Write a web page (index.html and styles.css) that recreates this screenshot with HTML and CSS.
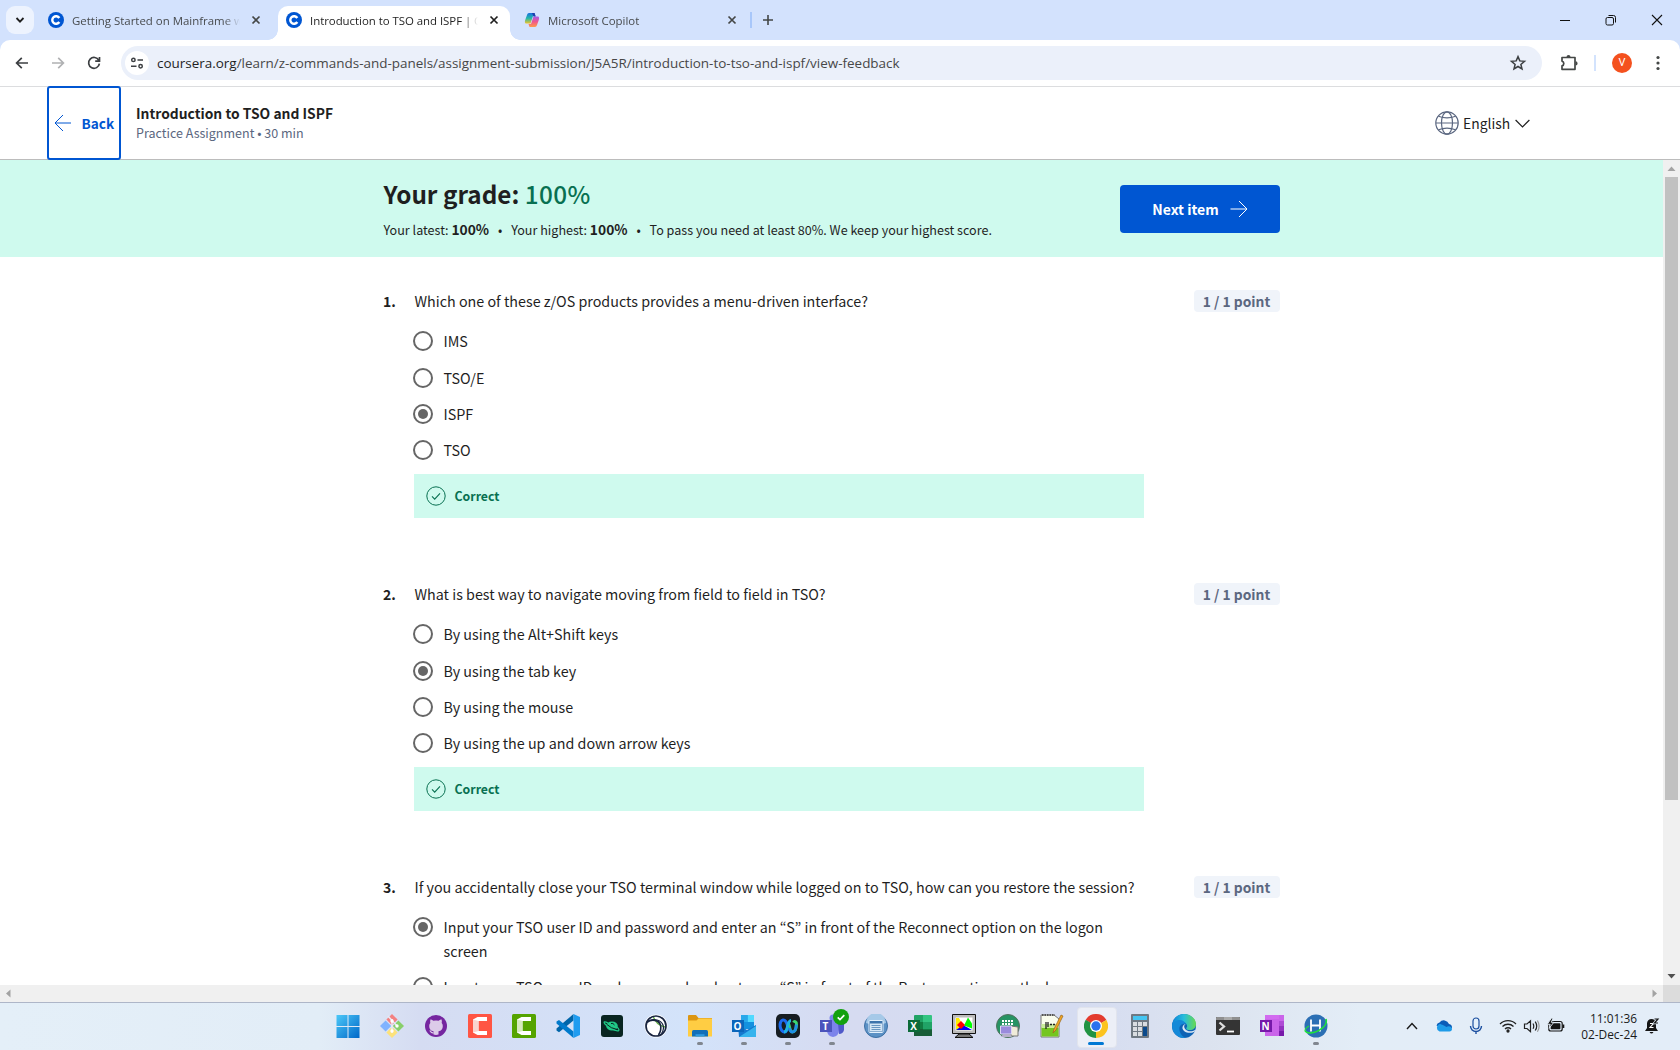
FILE: index.html
```html
<!DOCTYPE html>
<html lang="en">
<head>
<meta charset="utf-8">
<title>Introduction to TSO and ISPF | Coursera</title>
<link rel="stylesheet" href="styles.css">
</head>
<body>
<svg class="defs" width="0" height="0" aria-hidden="true">
  <symbol id="x" viewBox="0 0 16 16"><path d="M4.5 4.5l7 7m0-7l-7 7" stroke="currentColor" stroke-width="1.7" fill="none"/></symbol>
  <symbol id="coursera" viewBox="0 0 16 16"><circle cx="8" cy="8" r="8" fill="#0056d2"/><path d="M11.3 6A3.8 3.8 0 1 0 11.3 10" fill="none" stroke="#fff" stroke-width="2.4"/></symbol>
  <symbol id="check" viewBox="0 0 20 20"><circle cx="10" cy="10" r="9.2" fill="none" stroke="#087051"/><path d="M6 10.3l2.7 2.8L14 7.3" fill="none" stroke="#087051" stroke-width="1.1"/></symbol>
</svg>

<div class="tabstrip">
  <button class="tabsearch"><svg width="10" height="10" viewBox="0 0 10 10"><path d="M1.5 3l3.5 3.6L8.500 3" fill="none" stroke="#1f1f1f" stroke-width="1.8"/></svg></button>
  <div class="tab first"><svg class="fav"><use href="#coursera"/></svg><span class="tabtext">Getting Started on Mainframe with z/OS</span><svg class="close"><use href="#x"/></svg></div>
  <div class="tab active"><svg class="fav"><use href="#coursera"/></svg><span class="tabtext">Introduction to TSO and ISPF | Coursera</span><svg class="close"><use href="#x"/></svg></div>
  <div class="tab last"><svg class="fav" viewBox="0 0 16 16">
    <defs><linearGradient id="cp1" x2="0" y2="1"><stop stop-color="#1a6fe0"/><stop offset=".5" stop-color="#22b8a8"/><stop offset="1" stop-color="#f3c32a"/></linearGradient><linearGradient id="cp2" x2="0" y2="1"><stop stop-color="#a65be8"/><stop offset=".5" stop-color="#f0568c"/><stop offset="1" stop-color="#ff9a4a"/></linearGradient></defs>
    <path d="M5 1h5.500l1 3H9L6.500 11.500H2.500C.5 11.500.8 9.500 1.200 8L3 3C3.400 1.800 4 1 5 1z" fill="url(#cp1)"/><path d="M11 15H5.500l-1-3H7l2.500-7.500h4c2 0 1.700 2 1.300 3.500L13 13c-.4 1.200-1 2-2 2z" fill="url(#cp2)"/><path d="M8 1h2.500l1.200 3.500H9.500z" fill="#1e3fae"/></svg><span class="tabtext">Microsoft Copilot</span><svg class="close"><use href="#x"/></svg></div>
  <i class="tabdivider"></i>
  <svg class="plus" width="12" height="12" viewBox="0 0 12 12"><path d="M6 1v10M1 6h10" stroke="#444746" stroke-width="1.600"/></svg>
  <div class="winctl">
    <svg width="14" height="14" viewBox="0 0 14 14"><path d="M2 7.500h10" stroke="#111"/></svg>
    <svg width="14" height="14" viewBox="0 0 14 14" fill="none" stroke="#111"><rect x="2" y="4.500" width="7.500" height="7.500" rx="1.500"/><path d="M4.500 2.500h5a2 2 0 0 1 2 2v5"/></svg>
    <svg width="14" height="14" viewBox="0 0 14 14"><path d="M2 2l10 10m0-10L2 12" stroke="#111" stroke-width="1.100"/></svg>
  </div>
</div>

<div class="toolbarwrap"><div class="toolbar">
  <svg class="nav" viewBox="0 0 18 18"><path d="M15 9H4M8.800 3.800L3.600 9l5.200 5.200" fill="none" stroke="#3c3f42" stroke-width="1.700"/></svg>
  <svg class="nav" viewBox="0 0 18 18"><path d="M3 9h11M9.200 3.800L14.400 9l-5.200 5.200" fill="none" stroke="#b0b1b3" stroke-width="1.700"/></svg>
  <svg class="nav" viewBox="0 0 18 18"><path d="M13.800 6.300A5.400 5.400 0 1 0 14.400 9.600M14.500 3v4.200h-4.300" fill="none" stroke="#3c3f42" stroke-width="1.700"/></svg>
  <div class="omnibox">
    <span class="chip"><svg width="14" height="14" viewBox="0 0 14 14" fill="none" stroke="#3c3f42" stroke-width="1.500"><circle cx="3.400" cy="3.900" r="1.700"/><path d="M7.500 3.900H13M1 10.300h5.500"/><circle cx="10.600" cy="10.300" r="1.700"/></svg></span>
    <span class="url"><b>coursera.org</b>/learn/z-commands-and-panels/assignment-submission/J5A5R/introduction-to-tso-and-ispf/view-feedback</span>
    <svg class="star" viewBox="0 0 18 18"><path d="M9 2.600l1.800 4.300 4.700.4-3.600 3.100 1.100 4.600L9 12.500 5 15l1.100-4.600-3.600-3.100 4.700-.4z" fill="none" stroke="#3c3f42" stroke-width="1.500"/></svg>
  </div>
  <svg class="puzzle" width="18" height="18" viewBox="0 0 18 18"><path d="M2 3.500h13V15.300H2V11.900a2.500 2.500 0 0 0 0-4.800z" fill="none" stroke="#444746" stroke-width="1.700" stroke-linejoin="round"/><path d="M6.500 3a2 2 0 0 1 4 0zM15.500 7.300a2 2 0 0 1 0 4.200z" fill="#444746"/></svg>
  <i class="tooldivider"></i>
  <span class="avatar">V</span>
  <svg class="dots" width="4" height="16" viewBox="0 0 4 16" fill="#444746"><circle cx="2" cy="2.500" r="1.600"/><circle cx="2" cy="8" r="1.600"/><circle cx="2" cy="13.500" r="1.600"/></svg>
</div></div>

<header class="pagehead">
  <a class="back"><svg width="18" height="18" viewBox="0 0 18 18" fill="none" stroke="#0056d2"><path d="M17 9H1.500M9 1L1 9l8 8"/></svg>Back</a>
  <div class="headtitle"><h1>Introduction to TSO and ISPF</h1><p>Practice Assignment • 30 min</p></div>
  <div class="lang"><svg width="24" height="24" viewBox="0 0 24 24" fill="none" stroke="#5b6780" stroke-width="1.200"><circle cx="12" cy="12" r="11.200"/><ellipse cx="12" cy="12" rx="5.500" ry="11.200"/><path d="M1 12h22M3.500 5.200c5 2 12 2 17 0M3.500 18.800c5-2 12-2 17 0"/></svg><span>English</span><svg width="15" height="9" viewBox="0 0 15 9"><path d="M.6 1l6.900 7 6.900-7" fill="none" stroke="#1f1f1f" stroke-width="1.200"/></svg></div>
</header>

<div class="viewport">
  <main>
    <section class="banner">
      <div>
        <h2>Your grade: <span>100%</span></h2>
        <p class="scores"><span>Your latest: <b>100%</b></span><i>•</i><span>Your highest: <b>100%</b></span><i>•</i><span>To pass you need at least 80%. We keep your highest score.</span></p>
      </div>
      <button class="next">Next item<svg width="18" height="18" viewBox="0 0 18 18" fill="none" stroke="#fff"><path d="M.5 9H16.500M9 1l8 8-8 8"/></svg></button>
    </section>
    <section class="questions">
      <article>
        <div class="qhead"><b>1.</b><p>Which one of these z/OS products provides a menu-driven interface?</p><span class="points">1 / 1 point</span></div>
        <ul><li><i></i>IMS</li><li><i></i>TSO/E</li><li><i class="on"></i>ISPF</li><li><i></i>TSO</li></ul>
        <div class="correct"><svg width="20" height="20"><use href="#check"/></svg>Correct</div>
      </article>
      <article>
        <div class="qhead"><b>2.</b><p>What is best way to navigate moving from field to field in TSO?</p><span class="points">1 / 1 point</span></div>
        <ul><li><i></i>By using the Alt+Shift keys</li><li><i class="on"></i>By using the tab key</li><li><i></i>By using the mouse</li><li><i></i>By using the up and down arrow keys</li></ul>
        <div class="correct"><svg width="20" height="20"><use href="#check"/></svg>Correct</div>
      </article>
      <article>
        <div class="qhead"><b>3.</b><p>If you accidentally close your TSO terminal window while logged on to TSO, how can you restore the session?</p><span class="points">1 / 1 point</span></div>
        <ul><li><i class="on"></i><span>Input your TSO user ID and password and enter an “S” in front of the Reconnect option on the logon screen</span></li><li><i></i><span>Input your TSO user ID and password and enter an “S” in front of the Restore option on the l</span></li></ul>
      </article>
    </section>
  </main>
  <div class="vscroll"><svg width="17" height="17"><path d="M4.500 11l4-4.500 4 4.500z" fill="#a3a3a3"/></svg><i></i><svg width="17" height="17"><path d="M4.500 6l4 4.500 4-4.500z" fill="#505050"/></svg></div>
</div>
<div class="hscroll"><svg width="17" height="17"><path d="M10.500 4.500L6 8.500l4.500 4z" fill="#a3a3a3"/></svg><svg width="17" height="17"><path d="M6.500 4.500L11 8.500l-4.500 4z" fill="#a3a3a3"/></svg><i></i></div>

<footer class="taskbar">
  <div class="apps">
    <span><svg viewBox="0 0 24 24"><defs><linearGradient id="w" x2="1" y2="1"><stop stop-color="#4cc8f8"/><stop offset="1" stop-color="#0067c8"/></linearGradient></defs><path d="M.5 1h11v11H.500zM12.500 1h11v11h-11zM.5 13h11v11H.500zM12.500 13h11v11h-11z" fill="url(#w)"/></svg></span>
    <span><svg viewBox="0 0 24 24"><path d="M12 0l5.600 5.600L12 11.200 6.400 5.600z" fill="#f38181"/><path d="M18.400 6.400L24 12l-5.600 5.600-5.600-5.600z" fill="#88cf6a"/><path d="M12 12.800l5.600 5.600L12 24l-5.600-5.600z" fill="#fce27c"/><path d="M5.600 6.400l5.600 5.600-5.600 5.600L0 12z" fill="#80b3ff"/><path d="M8 2l9 10M12 5v14" stroke="#e7e9f6" stroke-width="1.500"/><circle cx="12" cy="7" r="1.700" fill="#fff"/><circle cx="12" cy="17" r="1.700" fill="#fff"/><circle cx="17" cy="12" r="1.700" fill="#fff"/></svg></span>
    <span><svg viewBox="0 0 24 24"><circle cx="12" cy="12" r="11" fill="#7526a0"/><path d="M9.500 20.500v-3.200C6.500 16.800 5.200 14.700 5.200 12c0-1.200.4-2.200 1.100-3-.3-1.100-.2-2.400.1-3.400 1.100 0 2.200.7 2.900 1.200a11 11 0 0 1 5.400 0c.7-.5 1.800-1.200 2.900-1.200.3 1 .4 2.300.1 3.400.7.8 1.100 1.800 1.100 3 0 2.700-1.300 4.800-4.300 5.300v3.200a8 8 0 0 1-5 0z" fill="#dccbe9"/><path d="M5.800 16.500q1.800 3 3.700 2.300" stroke="#dccbe9" stroke-width="1.200" fill="none"/></svg></span>
    <span><svg viewBox="0 0 24 24"><rect width="24" height="24" rx="1.500" fill="#ff5544"/><path d="M19 3H9.500L5 5.500v13L9.500 21H19v-4h-8.500V7H19z" fill="#fff"/><path d="M5 5.500l5.500 1.500v10L5 18.500z" fill="#f9d4cf"/></svg></span>
    <span><svg viewBox="0 0 24 24"><rect width="24" height="24" rx="1.500" fill="#55a400"/><path d="M19 3H9.500L5 5.500v13L9.500 21H19v-4h-8.500V7H19z" fill="#fff"/><path d="M5 5.500l5.500 1.500v10L5 18.500z" fill="#d6e9bd"/></svg></span>
    <span><svg viewBox="0 0 24 24"><path d="M17.500 0v6.500L3 18.200.5 16.500v-2z" fill="#0065a9"/><path d="M17.500 24v-6.500L3 6 .5 7.500v2z" fill="#007acc"/><path d="M17.500 0L24 3v18l-6.500 3z" fill="#1f9cf0"/></svg></span>
    <span><svg viewBox="0 0 24 24"><rect x="1" y="1" width="22" height="22" rx="3" fill="#092521"/><ellipse cx="12" cy="12" rx="5.800" ry="4.600" fill="#20c987"/><path d="M8 9C4.500 7 3 7.600 5 10c2.500 3 9 6.500 12.500 6.800 2.500 0 1.500-2-1-4" fill="none" stroke="#20c987" stroke-width="1.200"/><path d="M7 10.500q4 4 9.500 4.800M11 9.500q2-.8 3.500 1.500" fill="none" stroke="#092521" stroke-width="1"/></svg></span>
    <span><svg viewBox="0 0 24 24"><circle cx="12" cy="12" r="11.500" fill="#fff"/><path d="M9 2q3 9 12 11" stroke="#68b545" stroke-width="1.300" fill="none"/><circle cx="12" cy="12" r="10" fill="none" stroke="#17233f" stroke-width="1.700"/><path d="M3 8.500C8 4 15 6.500 16.500 11c1 3.500.2 6.500-2 10" fill="none" stroke="#17233f" stroke-width="1.600"/><path d="M4 7c6-3 13-1 15 4 1 3 .3 6-1.500 8.500" fill="none" stroke="#17233f" stroke-width="1.200"/></svg></span>
    <span class="run"><svg viewBox="0 0 24 24"><path d="M0 2q0-1 1-1h7l2.500 3H24v6H0z" fill="#dc9612"/><path d="M0 6.500h8.500l2-2H24V22.500H0z" fill="#ffcd43"/><path d="M4 22.500v-5q0-1.500 1.500-1.500h13q1.500 0 1.500 1.500v5z" fill="#126fb8"/><path d="M7.500 22.500v-2.300h9v2.300z" fill="#2e9be0"/></svg></span>
    <span class="run"><svg viewBox="0 0 24 24"><path d="M9 1h13v14H9z" fill="#1490df"/><path d="M15.500 1H22v7h-6.500z" fill="#50d9ff"/><path d="M9 1h6.500v7H9z" fill="#28a8ea"/><path d="M6 11l9 5 9-5v12H7z" fill="#1578ce"/><path d="M7 23l17-11v11z" fill="#36b3ed"/><path d="M0 6h12v12H0z" fill="#0b66bb"/></svg><em>O</em></span>
    <span class="run"><svg viewBox="0 0 24 24"><rect width="24" height="24" rx="5" fill="#171d22"/><path d="M17.500 8.500c1-1.600 3.200-1 3 2-.2 4-1.700 7.500-4 7.500-3 0-2.700-6-4.500-10" fill="none" stroke="#3bd671" stroke-width="3"/><path d="M20.300 10.500c-.2 4-1.600 7.500-3.900 7.500-1.700 0-2.600-2-3.200-4" fill="none" stroke="#1f8fe8" stroke-width="3"/><ellipse cx="7.800" cy="12" rx="3.700" ry="6" fill="none" stroke="#1c6cf0" stroke-width="3" transform="rotate(-8 7.800 12)"/><path d="M8 18c4.500 0 2.800-11.500 7-11.500" fill="none" stroke="#1fb4e2" stroke-width="3"/></svg></span>
    <span class="run teams"><svg viewBox="0 0 24 24"><circle cx="13" cy="4" r="3.500" fill="#7b83eb"/><path d="M7 7h12v9q0 6-6 7-6-1-6-7z" fill="#7b83eb"/><path d="M18 9h6v7q-1 4-5 4z" fill="#5059c9"/><path d="M0 6h12v12H0z" fill="#4b53bc"/></svg><em>T</em><svg class="ok" viewBox="0 0 16 16"><circle cx="8" cy="8" r="8" fill="#13a10e"/><path d="M4.700 8.300l2.300 2.200 4.300-4.300" fill="none" stroke="#fff" stroke-width="1.700"/></svg></span>
    <span><svg viewBox="0 0 24 24"><circle cx="12" cy="12" r="11.500" fill="#5c91c5" stroke="#3d70a4"/><path d="M2 9a10 10 0 0 1 20 0q-10 4-20 0z" fill="#a6c9e8"/><rect x="5" y="6.500" width="14" height="12" rx="1" fill="#3e74ac" stroke="#e4f1fd"/><path d="M6 9.500h12v8H6z" fill="#d6e6f5"/><path d="M7.500 11.500h9m-9 2h9m-9 2h9" stroke="#4d81b5" stroke-width=".8"/></svg></span>
    <span><svg viewBox="0 0 24 24"><path d="M6 2q0-1 1-1h8v7H6z" fill="#21a366"/><path d="M15 1h8q1 0 1 1v6h-9z" fill="#33c481"/><path d="M6 8h9v8H6z" fill="#107c41"/><path d="M15 8h9v7h-9z" fill="#21a366"/><path d="M6 15h18v7H6z" fill="#185c37"/><path d="M15 15h9v1h-9z" fill="#107c41"/><path d="M0 6h12v12H0z" fill="#0c6a38"/></svg><em>X</em></span>
    <span><svg viewBox="0 0 24 24"><path d="M.5.500h23v19H.500z" fill="#bbb" stroke="#111"/><path d="M3.500 3.500h17v13h-17z" fill="#fff"/><path d="M4 4h3l4 8-7 4z" fill="#ffed00"/><path d="M4 16l7-5 9 5z" fill="#00f"/><path d="M16 3.500l4 6v5l-8-3z" fill="#0f0"/><path d="M9 7l4 4-4 4-4-4z" fill="#f00"/><path d="M7 20h10l4 3.500H3z" fill="#777" stroke="#111"/></svg></span>
    <span><svg viewBox="0 0 24 24"><circle cx="12" cy="12" r="11.500" fill="#269363" stroke="#53705e"/><path d="M6 7h12M6 10h12M6 13h12" stroke="#fff" stroke-width="2" stroke-dasharray="2 1"/><path d="M15 12l7 1v9h-7z" fill="#f0ecd9" stroke="#777"/><path d="M4.500 12h11v8h-11z" fill="#9a8bdc" stroke="#ddd8f4"/><path d="M7 20h7l2 3H5z" fill="#b7afc9"/></svg></span>
    <span><svg viewBox="0 0 24 24"><path d="M1 1h13l5 4v18H1z" fill="#f9fced" stroke="#777"/><path d="M1.500 13h17v9.500h-17z" fill="#74c620"/><path d="M1.500 10h17v4h-17z" fill="#c9ec9a"/><path d="M2 1h13" stroke="#555" stroke-width="2" stroke-dasharray="1.500 1"/><path d="M6 8v7M8 8v5M10 10.500h2m1 0h2" stroke="#222" stroke-width="1.300"/><path d="M13 19l1-4 7-14 2 1-7 14z" fill="#f5a623" stroke="#96651b" stroke-width=".7"/></svg></span>
    <span class="current"><svg viewBox="0 0 24 24"><path d="M12 12L1.600 6A12 12 0 0 1 22.400 6z" fill="#e33b2e"/><path d="M12 12l10.400-6A12 12 0 0 1 12 24z" fill="#fcc31e"/><path d="M12 12v12A12 12 0 0 1 1.600 6z" fill="#229342"/><path d="M6.800 15L1.600 6 12 12z" fill="#229342"/><path d="M17.200 15L12 24V12z" fill="#fcc31e"/><circle cx="12" cy="12" r="6" fill="#fff"/><circle cx="12" cy="12" r="4.700" fill="#2b72ee"/></svg></span>
    <span><svg viewBox="0 0 24 24"><rect x="3" width="18" height="24" rx="1" fill="#6f7983"/><path d="M5 2h14v4H5z" fill="#45c5f2"/><path d="M5 8h4v4H5zM10 8h4v4h-4zM15 8h4v4h-4zM5 13h4v4H5zM10 13h4v4h-4zM5 18h4v4H5zM10 18h4v4h-4z" fill="#d9dde1"/><path d="M15 13h4v9h-4z" fill="#0b4a8c"/></svg></span>
    <span><svg viewBox="0 0 24 24"><defs><linearGradient id="e" x2="1"><stop stop-color="#0d82d8"/><stop offset=".5" stop-color="#28bddb"/><stop offset="1" stop-color="#69db4d"/></linearGradient></defs><circle cx="12" cy="12" r="12" fill="#0f63b5"/><path d="M0 11C1 4 6 0 12 0c7 0 12 5 12 10 0 4-3 6-6 6-3 0-5-1-3-3C16 8 9 5 0 11z" fill="url(#e)"/><path d="M0 12c0-6 11-9 14-2-5-1-8 3-6 8 1 3 3 5 6 5.800C6 25 0 19 0 12z" fill="#1489d8"/><path d="M14 10c-3 1-2 5 1 6.500s6 .8 8-.5q1 0 .5 1c-5 4-14 1-13-4 .5-2 2-3 3.500-3z" fill="#dbe7f4"/></svg></span>
    <span><svg viewBox="0 0 24 24"><rect y="3" width="24" height="18" rx="1" fill="#343434"/><path d="M0 6V4q0-1 1-1h22q1 0 1 1v2z" fill="#8f8f8f"/><path d="M8 3h8v3H8z" fill="#aaa"/><path d="M3.500 8.500L8 12.500l-4.500 4" fill="none" stroke="#ddd" stroke-width="2.300"/><path d="M11 17.500h7" stroke="#fff" stroke-width="1.800"/></svg></span>
    <span><svg viewBox="0 0 24 24"><path d="M5 1h18q1 0 1 1v5H5z" fill="#d26bf0"/><path d="M5 5h14v17H5z" fill="#ca64ea"/><path d="M19 1h5v6h-5z" fill="#ca64ea"/><path d="M19 7h5v5h-5z" fill="#ae4bd5"/><path d="M19 12h5v5h-5z" fill="#9332bf"/><path d="M19 17h5v5h-5z" fill="#7719aa"/><path d="M0 6h12v12H0z" fill="#7719aa"/></svg><em>N</em></span>
    <span class="run"><svg viewBox="0 0 24 24"><circle cx="12" cy="12" r="11.500" fill="#2b6fb4"/><path d="M7 5.500v12M16 5.500v12M7 11.500h9" stroke="#fff" stroke-width="1.800"/><path d="M1 17c5 6 24-3 21-12" fill="none" stroke="#1ee23a" stroke-width="1.600"/><path d="M1 17q0-3 4-5" fill="none" stroke="#1ee23a" stroke-width="1.200"/></svg></span>
  </div>
  <div class="tray">
    <svg viewBox="0 0 20 20"><path d="M5 13l5-5.500 5 5.500" fill="none" stroke="#1a1a1a" stroke-width="1.400"/></svg>
    <svg viewBox="0 0 20 20"><path d="M2.500 9.500a4 4 0 0 1 3-3 5.500 5.500 0 0 1 9.500 1.500 3.800 3.800 0 0 1 3 4l-8 2z" fill="#0a5cb8"/><path d="M5.500 15.500a4 4 0 0 1 0-7.500c2 0 6 2.500 7 3 2-1.500 5.500-.5 5.500 2 0 1.500-1 2.500-2.500 2.500z" fill="#1e9be8"/></svg>
    <svg viewBox="0 0 20 20"><rect x="7" y="2" width="6" height="11" rx="3" fill="#e4f0fb" stroke="#1b4fa0" stroke-width="1.200"/><path d="M4.500 10a5.500 5.500 0 0 0 11 0M10 15.500V18" fill="none" stroke="#1b4fa0" stroke-width="1.400"/></svg>
    <svg class="tight" viewBox="0 0 20 20" fill="none" stroke="#222" stroke-width="1.300"><path d="M2 8a11.300 11.300 0 0 1 16 0M4.500 10.500a7.800 7.800 0 0 1 11 0M7 13a4.200 4.200 0 0 1 6 0"/><circle cx="10" cy="15" r="1" fill="#222"/></svg>
    <svg class="tight" viewBox="0 0 20 20" fill="none" stroke="#222" stroke-width="1.200"><path d="M2.500 8v4.500h2.500l3.500 3.200V4.800L5 8zM11 7.500q1.500 2.700 0 5.200M13.200 5.700q3 4.500 0 8.800"/><path d="M15.400 4.500q3.500 5.600 0 11.200" stroke="#999"/></svg>
    <svg class="batt" viewBox="0 0 20 20"><rect x="2.800" y="5.500" width="13.400" height="9.500" rx="2" fill="none" stroke="#151515" stroke-width="1.200"/><rect x="4.600" y="7.300" width="9.800" height="5.900" rx=".8" fill="#151515"/><path d="M16.500 8.500h1.800v3.500h-1.800z" fill="#151515"/><path d="M5.500 2L1.300 8.300h2.900l-1 4 4.600-6H5.300L7 2z" fill="#151515" stroke="#e4eef8" stroke-width=".9"/></svg>
    <div class="clock"><div>11:01:36</div><div>02-Dec-24</div></div>
    <svg class="bell" viewBox="0 0 20 20"><path d="M3 15l2-3V7.500a4.500 4.500 0 0 1 9 0V12l2 3zM7.500 16h4q-2 3-4 0z" fill="#151515"/><path d="M8 7.500h3.500L8 11.500h3.500" fill="none" stroke="#fff" stroke-width="1.100"/><path d="M12.500 3h3.500l-3.500 4H16" fill="none" stroke="#e4eef8" stroke-width="2.600"/><path d="M12.500 3h3.500l-3.500 4H16" fill="none" stroke="#151515" stroke-width="1.200"/></svg>
  </div>
</footer>
</body>
</html>
```
FILE: styles.css
```css
* { box-sizing: border-box; margin: 0; padding: 0; }
body { width: 1680px; height: 1050px; overflow: hidden; display: flex; flex-direction: column; background: #fff; color: #1f1f1f; font: 14.32px/24px "Noto Sans CJK KR", "Noto Sans", sans-serif; }
svg { flex: none; display: block; }
.defs { position: absolute; }
button { border: 0; font: inherit; }
ul { list-style: none; }

/* Browser tabs */
.tabstrip { height: 40px; flex: none; background: #d3e2fd; display: flex; padding: 0 0 0 6px; font: 11.45px/16px "Open Sans", "Noto Sans", sans-serif; color: #474a4d; }
.tabsearch { width: 28px; height: 28px; margin-top: 6px; border-radius: 9px; background: #edf3fe; display: grid; place-items: center; }
.tab { height: 34px; margin-top: 6px; display: flex; align-items: center; padding-bottom: 6px; }
.fav { width: 16px; height: 16px; margin-right: 8px; }
.close { width: 16px; height: 16px; color: #444746; }
.tabtext { flex: 1; padding-top: 2px; white-space: nowrap; overflow: hidden; margin-right: 8px; -webkit-mask-image: linear-gradient(90deg, #000 calc(100% - 16px), transparent); mask-image: linear-gradient(90deg, #000 calc(100% - 16px), transparent); }
.first { width: 216px; margin-left: 14px; }
.active { width: 232px; margin-left: 14px; padding: 0 8px 6px; background: #fff; border-radius: 10px 10px 0 0; position: relative; color: #1f1f1f; }
.active .tabtext { letter-spacing: -.04px; }
.active .close { color: #1f1f1f; }
.active::before, .active::after { content: ""; position: absolute; bottom: 0; width: 10px; height: 10px; }
.active::before { left: -10px; background: radial-gradient(circle at 0 0, transparent 9.5px, #fff 10px); }
.active::after { right: -10px; background: radial-gradient(circle at 100% 0, transparent 9.5px, #fff 10px); }
.last { width: 216px; margin-left: 14px; }
.tabdivider { width: 2px; height: 16px; margin: 12px 0 0 10px; background: #a8c7fa; }
.plus { margin: 14px 0 0 10px; }
.winctl { margin: 13px 16px 0 auto; display: flex; gap: 32px; }

/* Address bar */
.toolbarwrap { height: 47px; flex: none; background: #d3e2fd; }
.toolbar { height: 47px; padding: 0 20px 1px 13px; display: flex; align-items: center; background: #fff; border-radius: 10px 10px 0 0; border-bottom: 1px solid #dcdddf; }
.nav { width: 18px; height: 18px; margin-right: 18px; }
.omnibox { width: 1421px; height: 34px; background: #ebf0fa; border-radius: 17px; display: flex; align-items: center; padding: 0 15px 0 4px; }
.chip { width: 24px; height: 24px; border-radius: 50%; background: #fff; display: grid; place-items: center; margin-right: 8px; }
.url { font: 13.46px/20px "Open Sans", "Noto Sans", sans-serif; color: #474747; flex: 1; white-space: nowrap; }
.url b { font-weight: 400; color: #1f1f1f; }
.star { width: 18px; height: 18px; }
.puzzle { margin-left: 18px; }
.tooldivider { width: 2px; height: 16px; background: #d3e3fd; margin-left: 16px; }
.avatar { width: 20px; height: 20px; border-radius: 50%; background: #f4511e; color: #fff; margin-left: 16px; font: 11px/20px Roboto, sans-serif; text-align: center; }
.dots { margin-left: auto; }

/* Assignment header */
.pagehead { height: 73px; flex: none; border-bottom: 1px solid #bcbcbc; display: flex; align-items: flex-start; padding-left: 47px; }
.back { width: 74px; height: 74px; margin-top: -1px; border: 2px solid #0056d2; border-radius: 3px; display: flex; align-items: center; gap: 9.5px; padding: 0 0 0 5px; font-size: 13.6px; font-weight: 700; color: #0056d2; }
.headtitle { margin-left: 15px; padding-top: 16px; }
.headtitle h1 { font-size: 13.85px; line-height: 20px; }
.headtitle p { font-size: 12.53px; line-height: 20px; color: #5b6780; }
.lang { margin: 24px 150px 0 auto; display: flex; align-items: center; gap: 4px; font-size: 13.9px; }
.lang span { width: 48px; }

/* Scrolling page */
.viewport { height: 825px; flex: none; display: flex; }
main { width: 1663px; overflow: hidden; }
.banner { height: 97px; background: #cffaee; display: flex; padding: 18px 383px 0 383.5px; justify-content: space-between; }
.banner h2 { height: 32px; font-size: 24.3px; line-height: 32px; }
.banner h2 span { color: #087051; font-weight: 500; letter-spacing: .35px; }
.scores { height: 20px; margin-top: 10px; display: flex; font-size: 12.58px; line-height: 20px; white-space: nowrap; }
.scores b { font-size: 13.8px; line-height: 18px; }
.scores i { width: 22px; text-align: center; font-style: normal; }
.next { width: 160px; height: 48px; margin-top: 7px; border-radius: 4px; background: #0056d2; color: #fff; font-size: 14px; font-weight: 700; display: flex; align-items: center; justify-content: center; gap: 11px; }
.questions { width: 897px; margin-left: 383px; padding-top: 33px; }
article { margin-bottom: 65px; }
.qhead { display: flex; height: 22px; line-height: 22px; margin-bottom: 17px; white-space: nowrap; }
.qhead b { width: 31.5px; font-size: 14px; }
.points { margin-left: auto; width: 86px; border-radius: 4px; background: #f0f4fa; color: #5b6780; font-weight: 700; font-size: 13.82px; text-align: center; padding-right: 1px; }
article ul { display: flex; flex-direction: column; gap: 12px; margin: 0 0 12px 30px; width: 710px; }
li { display: flex; gap: 10.5px; }
li:first-child { margin-bottom: 1px; }
article:last-child li { margin-bottom: 0; }
li i { flex: none; width: 20px; height: 20px; margin-top: 2px; border: 2px solid #666; border-radius: 50%; display: grid; place-items: center; }
li i.on::after { content: ""; width: 10px; height: 10px; border-radius: 50%; background: #666; }
.correct { width: 730px; height: 44px; margin-left: 31px; padding-left: 12px; background: #cffaee; color: #087051; font-size: 12.3px; font-weight: 700; display: flex; align-items: center; gap: 8.5px; }

/* Scrollbars */
.vscroll { width: 17px; background: #f0f0f0; display: flex; flex-direction: column; }
.vscroll i { width: 13px; height: 623px; margin: 0 2px auto; background: #c1c1c1; }
.hscroll { height: 17px; flex: none; background: #f0f0f0; display: flex; }
.hscroll svg + svg { margin-left: auto; }
.hscroll i { width: 17px; background: #dcdcdc; }

/* Taskbar */
.taskbar { height: 48px; flex: none; border-top: 1px solid #aeb6c8; background: linear-gradient(90deg, #e4eff8 0, #e2edf7 19%, #d5dcf2 25%, #d3e3fa 41%, #d6dbf1 50%, #d5dcf1 64%, #dce3ef 72%, #e3edf7 81%, #e3edf8 100%); display: flex; }
.apps { display: flex; margin-left: 325.5px; }
.apps span { width: 44px; height: 46px; display: grid; place-items: center; position: relative; }
.apps span > svg { width: 24px; height: 24px; }
.apps em { position: absolute; left: 10px; top: 17px; width: 12px; text-align: center; font: 700 10px/12px "Open Sans", sans-serif; color: #fff; }
.apps .run::after { content: ""; position: absolute; left: 19px; top: 39px; width: 6px; height: 3px; border-radius: 2px; background: #80868f; }
.apps span > .ok { position: absolute; width: 16px; height: 16px; left: 23px; top: 6px; }
.current { z-index: 0; }
.current::before { content: ""; position: absolute; z-index: -1; left: 3px; top: 4px; width: 38px; height: 39px; border-radius: 4px; background: #eceff7; border: 1px solid #e1e4ed; }
.current::after { content: ""; position: absolute; left: 14px; top: 39px; width: 16px; height: 3px; border-radius: 2px; background: #0078d4; }
.tray { height: 46px; margin-left: auto; display: flex; align-items: center; padding-right: 18px; }
.tray svg { width: 20px; height: 20px; margin-right: 12px; }
.tray .tight { margin-right: 4px; }
.tray .batt { margin-right: 0; }
.clock { width: 71px; text-align: right; font: 11.9px/16px "Open Sans", "Noto Sans", sans-serif; color: #1a1a1a; }
.tray .bell { margin: 0 0 0 5px; }
```
